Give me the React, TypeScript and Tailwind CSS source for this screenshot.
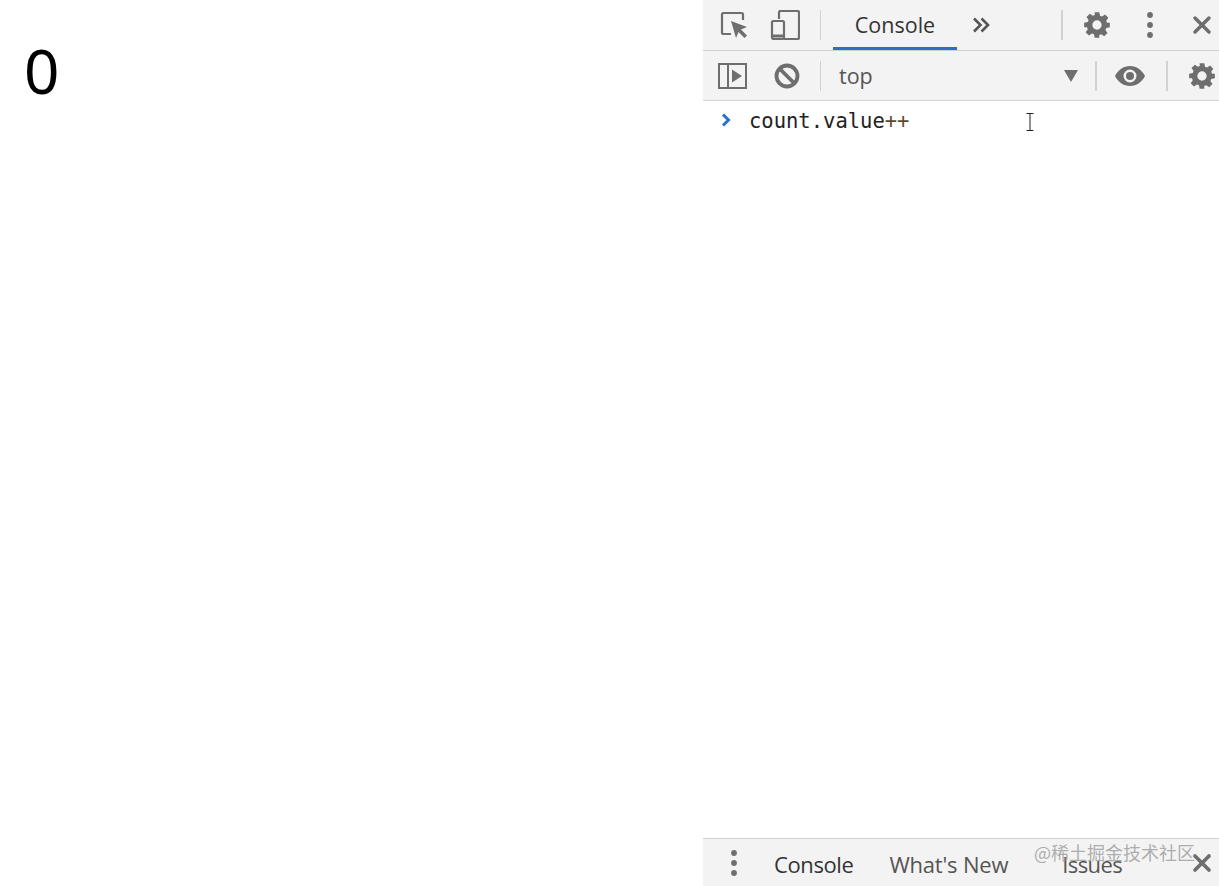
import { X } from 'lucide-react';

const uiFont = { fontFamily: '"Open Sans", "Noto Sans", sans-serif' };

function Gear({ className }: { className: string }) {
  return (
    <svg viewBox="0 0 24 24" className={className} fill="#6e6e6e">
      <path
        fillRule="evenodd"
        d="M10 1h4l.6 3.1 1.7.7 2.6-1.8 2.8 2.8-1.8 2.6.7 1.7L23 10v4l-3.1.6-.7 1.7 1.8 2.6-2.8 2.8-2.6-1.8-1.7.7L14 23h-4l-.6-3.1-1.7-.7-2.6 1.8-2.8-2.8 1.8-2.6-.7-1.7L1 14v-4l3.1-.6.7-1.7L3 5.1 5.800 2.300l2.600 1.800 1.700-.7L10 1zm2 7a4 4 0 1 0 0 8 4 4 0 0 0 0-8z"
      />
    </svg>
  );
}

function Dots({ className }: { className: string }) {
  return (
    <svg viewBox="0 0 6 26" className={className} fill="#6e6e6e">
      <circle cx="3" cy="3" r="2.900" />
      <circle cx="3" cy="13" r="2.900" />
      <circle cx="3" cy="23" r="2.900" />
    </svg>
  );
}

function Divider() {
  return <div className="w-[2px] h-[30px] bg-[#d2d2d2]" />;
}

export default function App() {
  return (
    <div className="flex w-full h-[886px] bg-white overflow-hidden relative" style={uiFont}>
      <div className="flex-1 pl-[24px] pt-[30px]">
        <div className="text-[62px] leading-[80px] text-black" style={{ fontFamily: '"Noto Sans", sans-serif' }}>0</div>
      </div>

      <div className="w-[516px] flex flex-col">
        {/* top toolbar */}
        <div className="h-[51px] bg-[#f3f3f3] border-b border-[#cfcfcf] flex items-center pl-[17px]">
          <svg viewBox="0 0 30 30" className="w-[30px] h-[30px]" fill="none">
            <path d="M11 24H3.500A1.500 1.500 0 0 1 2 22.500V4.500A1.500 1.500 0 0 1 3.500 3h18A1.500 1.500 0 0 1 23 4.500V10" stroke="#6e6e6e" strokeWidth="2.200" />
            <path d="M11 11l16 6-6 2.500 6 6-2.500 2.500-6-6L16 28z" fill="#6e6e6e" />
          </svg>
          <svg viewBox="0 0 30 30" className="w-[30px] h-[30px] ml-[20px]" fill="none">
            <path d="M9 9V2.500A1.500 1.500 0 0 1 10.500 1h17A1.500 1.500 0 0 1 29 2.500v25a1.500 1.500 0 0 1-1.500 1.500H14" stroke="#6e6e6e" strokeWidth="2.200" />
            <rect x="2" y="11" width="12" height="18" rx="1.500" stroke="#6e6e6e" strokeWidth="2.200" />
            <path d="M2 26h12" stroke="#6e6e6e" strokeWidth="3" />
          </svg>
          <div className="w-[1px] h-[30px] bg-[#d2d2d2] ml-[20px]" />
          <div className="w-[124px] h-[50px] ml-[12px] border-b-[3px] border-[#2a6fd0] flex items-center justify-center text-[21.500px] leading-none text-[#333333] pt-[3px]">
            Console
          </div>
          <svg viewBox="0 0 18 16" className="w-[18px] h-[16px] ml-[15px]" fill="none" stroke="#555555" strokeWidth="2.600">
            <path d="M2 1.500L8.500 8 2 14.500" />
            <path d="M9.500 1.500L16 8l-6.500 6.500" />
          </svg>
          <div className="ml-[71px]"><Divider /></div>
          <Gear className="w-[28px] h-[28px] ml-[20px]" />
          <Dots className="w-[8px] h-[26px] ml-[35px]" />
          <X className="w-[28px] h-[28px] ml-[34px] text-[#6e6e6e]" strokeWidth={3} />
        </div>

        {/* filter bar */}
        <div className="h-[50px] bg-[#f3f3f3] border-b border-[#d6d6d6] flex items-center pl-[15px]">
          <svg viewBox="0 0 30 26" className="w-[30px] h-[26px]" fill="none">
            <rect x="1" y="1" width="27" height="24" stroke="#6e6e6e" strokeWidth="2" />
            <path d="M10 1v24" stroke="#6e6e6e" strokeWidth="2" />
            <path d="M14 6.500L24 13l-10 6.500z" fill="#6e6e6e" />
          </svg>
          <svg viewBox="0 0 26 26" className="w-[26px] h-[26px] ml-[26px]" fill="none" stroke="#6e6e6e" strokeWidth="3.800">
            <circle cx="13" cy="13" r="10.500" />
            <path d="M5.500 5.500l15 15" />
          </svg>
          <div className="w-[1px] h-[30px] bg-[#d2d2d2] ml-[20px]" />
          <div className="ml-[18px] w-[225px] text-[21.500px] leading-none text-[#555555]">top</div>
          <svg viewBox="0 0 14 12" className="w-[14px] h-[12px]" fill="#6e6e6e">
            <path d="M0 0h14L7 12z" />
          </svg>
          <div className="ml-[17px]"><Divider /></div>
          <svg viewBox="0 0 30 20" className="w-[30px] h-[20px] ml-[18px]">
            <path
              fillRule="evenodd"
              fill="#6e6e6e"
              d="M15 0c6.500 0 12 4 15 10-3 6-8.500 10-15 10S3 16 0 10C3 4 8.500 0 15 0zm0 3.500a6.500 6.500 0 1 0 0 13 6.500 6.500 0 0 0 0-13zm0 2.500a4 4 0 1 1 0 8 4 4 0 0 1 0-8z"
            />
          </svg>
          <div className="ml-[21px]"><Divider /></div>
          <Gear className="w-[28px] h-[28px] ml-[20px] shrink-0" />
        </div>

        {/* console */}
        <div className="flex-1 bg-white flex items-start pt-[7px]">
          <svg viewBox="0 0 10 14" className="w-[10px] h-[14px] ml-[18px] mt-[5px]" fill="none" stroke="#2a6fd0" strokeWidth="3">
            <path d="M2 1.500L7.500 7 2 12.500" />
          </svg>
          <div className="ml-[18px] text-[20.500px] leading-[26px] text-[#222222]" style={{ fontFamily: '"DejaVu Sans Mono", monospace' }}>
            count.value<span className="text-[#5c4a32]">++</span>
          </div>
        </div>

        {/* drawer tabs */}
        <div className="h-[48px] bg-[#f3f3f3] border-t border-[#d2d2d2] flex items-center pl-[27px] text-[22px] leading-none">
          <Dots className="w-[8px] h-[26px]" />
          <span className="ml-[36px] pt-[2px] text-[#333333] tracking-[-0.4px]">Console</span>
          <span className="ml-[36px] pt-[2px] text-[#555555] tracking-[-0.2px]">What's New</span>
          <span className="ml-[54px] pt-[2px] text-[#555555] tracking-[-0.6px]">Issues</span>
          <X className="w-[28px] h-[28px] ml-[auto] mr-[3px] text-[#6e6e6e]" strokeWidth={3.200} />
        </div>
      </div>

      {/* text cursor */}
      <svg viewBox="0 0 8 18" className="absolute left-[1026px] top-[113px] w-[8px] h-[18px]" fill="none" stroke="#222222" strokeWidth="1">
        <path d="M0.500 0.500h7M4 0.500v17M0.500 17.500h7" />
      </svg>

      {/* watermark */}
      <div
        className="absolute left-[1034px] top-[840px] text-[18px] leading-[24px] text-[#9a9a9a]/80 whitespace-nowrap"
        style={{ fontFamily: '"Noto Sans CJK SC", sans-serif' }}
      >
        @稀土掘金技术社区
      </div>
    </div>
  );
}
